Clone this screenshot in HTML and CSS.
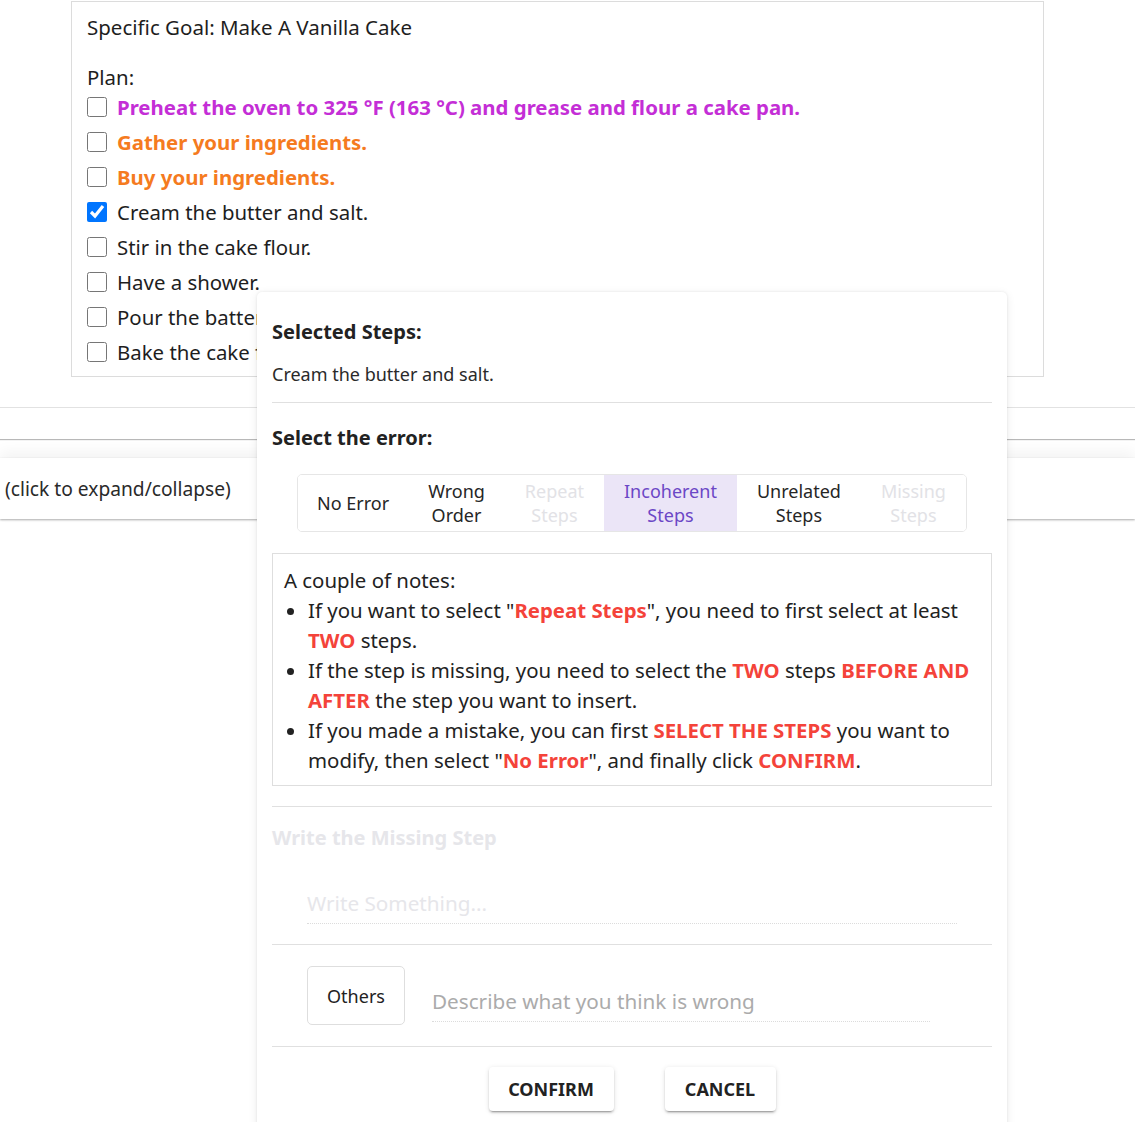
FILE: index.html
```html
<!DOCTYPE html>
<html lang="en">
<head>
<meta charset="utf-8">
<title>Plan Review</title>
<link rel="stylesheet" href="styles.css">
</head>
<body>
<main class="page">
  <section class="goal-card">
    <div class="goal">Specific Goal: Make A Vanilla Cake</div>
    <div class="plan-label">Plan:</div>
    <ul class="steps">
      <li class="step step-purple"><input type="checkbox" class="cb"><span>Preheat the oven to 325 °F (163 °C) and grease and flour a cake pan.</span></li>
      <li class="step step-orange"><input type="checkbox" class="cb"><span>Gather your ingredients.</span></li>
      <li class="step step-orange"><input type="checkbox" class="cb"><span>Buy your ingredients.</span></li>
      <li class="step"><input type="checkbox" class="cb" checked><span>Cream the butter and salt.</span></li>
      <li class="step"><input type="checkbox" class="cb"><span>Stir in the cake flour.</span></li>
      <li class="step"><input type="checkbox" class="cb"><span>Have a shower.</span></li>
      <li class="step"><input type="checkbox" class="cb"><span>Pour the batter into the pan.</span></li>
      <li class="step"><input type="checkbox" class="cb"><span>Bake the cake for 30 minutes.</span></li>
    </ul>
  </section>
  <div class="strip strip-top"></div>
  <div class="strip strip-toggle">(click to expand/collapse)</div>
</main>

<div class="dialog">
  <h2 class="sec-title sec-first">Selected Steps:</h2>
  <p class="selected-text">Cream the butter and salt.</p>
  <hr class="rule rule-selected">
  <h2 class="sec-title sec-error">Select the error:</h2>
  <div class="toggle-group">
    <button class="tg tg-noerror">No Error</button>
    <button class="tg">Wrong<br>Order</button>
    <button class="tg tg-disabled">Repeat<br>Steps</button>
    <button class="tg tg-selected">Incoherent<br>Steps</button>
    <button class="tg">Unrelated<br>Steps</button>
    <button class="tg tg-disabled">Missing<br>Steps</button>
  </div>
  <div class="notes">
    <div class="notes-head">A couple of notes:</div>
    <ul class="notes-list">
      <li>If you want to select "<b class="hl">Repeat Steps</b>", you need to first select at least<br><b class="hl">TWO</b> steps.</li>
      <li>If the step is missing, you need to select the <b class="hl">TWO</b> steps <b class="hl">BEFORE AND</b><br><b class="hl">AFTER</b> the step you want to insert.</li>
      <li>If you made a mistake, you can first <b class="hl">SELECT THE STEPS</b> you want to<br>modify, then select "<b class="hl">No Error</b>", and finally click <b class="hl">CONFIRM</b>.</li>
    </ul>
  </div>
  <hr class="rule rule-notes">
  <h2 class="sec-title sec-muted">Write the Missing Step</h2>
  <div class="field field-missing"><input class="field-input" type="text" placeholder="Write Something..." disabled></div>
  <hr class="rule rule-missing">
  <div class="others-row">
    <button class="others-btn">Others</button>
    <div class="field field-others"><input class="field-input input-others" type="text" placeholder="Describe what you think is wrong"></div>
  </div>
  <hr class="rule rule-others">
  <div class="actions">
    <button class="action-btn btn-confirm">CONFIRM</button>
    <button class="action-btn btn-cancel">CANCEL</button>
  </div>
</div>
</body>
</html>
```

FILE: styles.css
```css
* { box-sizing: border-box; }

html, body {
  margin: 0;
  padding: 0;
  background: #ffffff;
}

body {
  font-family: "Noto Sans", "Open Sans", sans-serif;
  color: #1e1e1e;
  overflow: hidden;
  height: 1122px;
  position: relative;
}

.page {
  padding-top: 1px;
}

/* ---------- goal card ---------- */
.goal-card {
  margin: 0 0 0 71px;
  width: 973px;
  border: 1px solid #dcdcdc;
  padding: 11px 15px 7px 15px;
}

.goal {
  font-size: 20.5px;
  line-height: 28px;
  height: 28px;
}

.plan-label {
  font-size: 20.4px;
  line-height: 24px;
  height: 24px;
  margin-top: 24px;
}

.steps {
  list-style: none;
  margin: 0;
  padding: 0;
}

.step {
  display: flex;
  align-items: center;
  height: 35px;
  font-size: 20.4px;
  gap: 10px;
  white-space: nowrap;
}

.cb {
  width: 20px;
  height: 20px;
  margin: 0;
  flex: none;
  accent-color: #0075ff;
}

.step-purple { color: #c42ed6; font-weight: 700; }
.step-orange { color: #f57b1f; font-weight: 700; }

/* ---------- strips below ---------- */
.strip {
  width: 100%;
  background: #fff;
}

.strip-top {
  margin-top: 30px;
  height: 32px;
  border-top: 1px solid #e2e2e2;
  box-shadow: 0 1px 1px rgba(0, 0, 0, 0.28);
  position: relative;
  z-index: 1;
}

.strip-toggle {
  margin-top: 19px;
  height: 61px;
  display: flex;
  align-items: center;
  padding-left: 5px;
  font-size: 19.2px;
  color: #2a2a2a;
  box-shadow: 0 -6px 14px rgba(0, 0, 0, 0.05), 0 1px 2px rgba(0, 0, 0, 0.32);
}

/* ---------- dialog ---------- */
.dialog {
  position: absolute;
  left: 257px;
  top: 292px;
  width: 750px;
  height: 860px;
  background: #fff;
  border-radius: 5px;
  padding: 0 15px;
  box-shadow: 0 0 3px rgba(0, 0, 0, 0.08), 0 2px 10px rgba(0, 0, 0, 0.08);
  z-index: 5;
}

.sec-title {
  margin: 0;
  font-size: 20px;
  line-height: 28px;
  font-weight: 700;
  color: #222;
}

.sec-first { padding-top: 26px; }

.selected-text {
  margin: 16px 0 0 0;
  font-size: 18px;
  line-height: 24px;
  color: #2a2a2a;
}

.rule {
  border: 0;
  border-top: 1px solid #e0e0e0;
  margin: 0;
}

.rule-selected { margin-top: 16px; }

.sec-error { margin-top: 21px; }

/* toggle group */
.toggle-group {
  display: flex;
  width: max-content;
  margin: 22px auto 0 auto;
  height: 58px;
  border: 1px solid #e6e6e6;
  border-radius: 5px;
  overflow: hidden;
}

.tg {
  font-family: inherit;
  font-size: 18px;
  line-height: 24px;
  background: #fff;
  border: 0;
  padding: 0 20px;
  color: #262626;
  cursor: pointer;
}

.tg-noerror { padding: 0 19px; }

.tg-disabled {
  color: #e2e2e6;
  cursor: default;
}

.tg-selected {
  background: #ebe5f7;
  color: #6b47c6;
}

/* notes */
.notes {
  margin-top: 21px;
  border: 1px solid #dedede;
  padding: 11px 11px 10px 11px;
  font-size: 20.4px;
  line-height: 30px;
  color: #222;
}

.notes-list {
  margin: 0;
  padding-left: 24px;
}

.notes-list li {
  white-space: nowrap;
}

.hl {
  color: #f4433a;
  font-weight: 700;
}

.rule-notes { margin-top: 20px; }

.sec-muted {
  margin-top: 17px;
  color: #e6e6ea;
}

.field {
  height: 41px;
  border-bottom: 1px dotted #dcdcdc;
}

.field-missing {
  margin: 31px 35px 0 35px;
}

.field-input {
  width: 100%;
  height: 40px;
  border: 0;
  outline: none;
  padding: 0;
  background: transparent;
  font-family: inherit;
  font-size: 20.7px;
}

.field-missing .field-input::placeholder { color: #e6e6ea; }

.rule-missing { margin-top: 20px; }

.others-row {
  margin: 21px 0 0 35px;
  display: flex;
  align-items: flex-end;
  gap: 27px;
}

.others-btn {
  width: 98px;
  height: 59px;
  font-family: inherit;
  font-size: 18px;
  color: #222;
  background: #fff;
  border: 1px solid #dedede;
  border-radius: 5px;
}

.field-others {
  width: 498px;
  margin-bottom: 3px;
}

.input-others::placeholder { color: #ababab; }

.rule-others { margin-top: 21px; }

.actions {
  margin-top: 20px;
  display: flex;
  justify-content: center;
  gap: 51px;
}

.action-btn {
  height: 44px;
  font-family: inherit;
  font-size: 18px;
  font-weight: 700;
  color: #222;
  background: #fff;
  border: 0;
  border-radius: 4px;
  box-shadow: 0 3px 1px -2px rgba(0, 0, 0, 0.2), 0 2px 2px 0 rgba(0, 0, 0, 0.14), 0 1px 5px 0 rgba(0, 0, 0, 0.12);
}

.btn-confirm { width: 125px; }
.btn-cancel { width: 111px; }
```
